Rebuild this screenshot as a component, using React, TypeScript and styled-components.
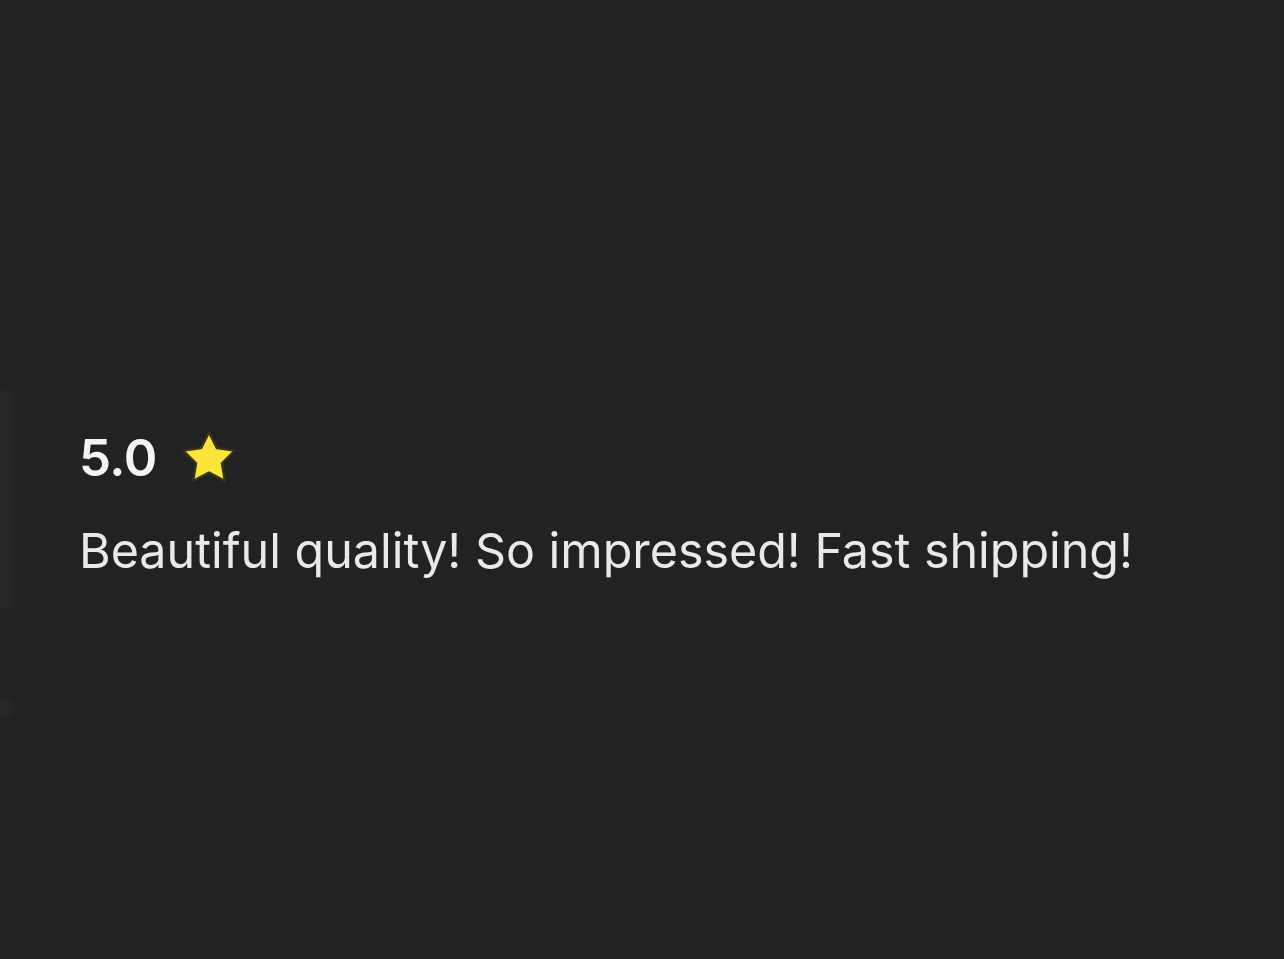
import styled, { createGlobalStyle } from 'styled-components';

const GlobalStyle = createGlobalStyle`
  html, body {
    margin: 0;
    padding: 0;
    background: #222222;
  }
  body {
    font-family: Inter, "Noto Sans", "Liberation Sans", sans-serif;
    -webkit-font-smoothing: antialiased;
  }
`;

const Page = styled.div`
  width: 1284px;
  height: 959px;
  background: #222222;
  display: flex;
  align-items: flex-start;
  overflow: hidden;
`;

const Edge = styled.div`
  display: flex;
  flex-direction: column;
  gap: 92px;
  padding-top: 390px;
  width: 12px;
`;

const EdgeCard = styled.div<{ h: number }>`
  height: ${({ h }) => h}px;
  background: #262626;
  border-radius: 0 3px 3px 0;
`;

const Review = styled.div`
  display: flex;
  flex-direction: column;
  gap: 33px;
  padding: 428px 0 0 67px;
`;

const RatingRow = styled.div`
  display: flex;
  align-items: center;
  gap: 25px;
`;

const Score = styled.span`
  font-size: 51px;
  font-weight: 600;
  color: #f4f4f4;
  letter-spacing: -0.5px;
  line-height: 60px;
`;

const Comment = styled.p`
  margin: 0;
  font-size: 48.4px;
  font-weight: 400;
  color: #e9e9e9;
  line-height: 60px;
  white-space: nowrap;
`;

function Star() {
  return (
    <svg width="54" height="54" viewBox="0 0 52 52">
      <path
        d="M26 1.5 L33.6 16.5 L50.5 19 L38.4 31 L41.2 48 L26 40 L10.8 48 L13.6 31 L1.5 19 L18.4 16.5 Z"
        fill="#fbe53b"
        stroke="#3b3515"
        strokeWidth="2.2"
        strokeLinejoin="round"
      />
    </svg>
  );
}

export default function App() {
  return (
    <>
      <GlobalStyle />
      <Page>
        <Edge>
          <EdgeCard h={218} />
          <EdgeCard h={16} />
        </Edge>
        <Review>
          <RatingRow>
            <Score>5.0</Score>
            <Star />
          </RatingRow>
          <Comment>Beautiful quality! So impressed! Fast shipping!</Comment>
        </Review>
      </Page>
    </>
  );
}
